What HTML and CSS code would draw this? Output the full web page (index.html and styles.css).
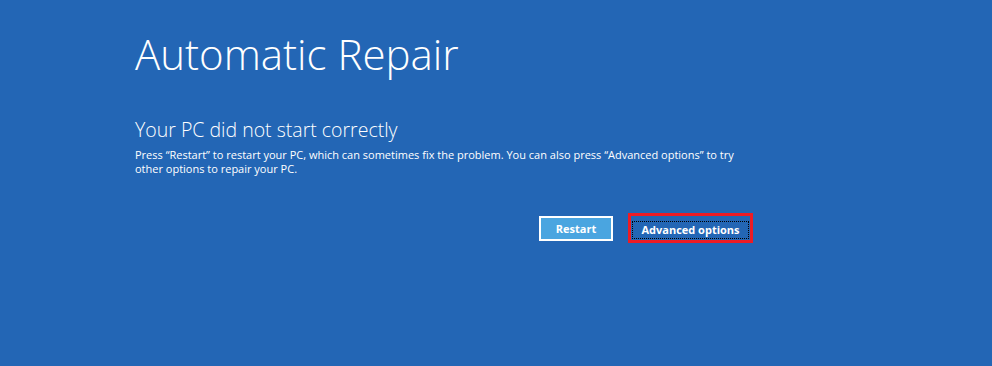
FILE: index.html
```html
<!DOCTYPE html>
<html lang="en">
<head>
    <meta charset="UTF-8">
    <meta name="viewport" content="width=device-width, initial-scale=1.0">
    <title>Automatic Repair</title>
    <link rel="stylesheet" href="styles.css">
</head>
<body>
    <div class="screen">
        <h1 class="title">Automatic Repair</h1>
        <h2 class="subtitle">Your PC did not start correctly</h2>
        <p class="message">Press “Restart” to restart your PC, which can sometimes fix the problem. You can also press “Advanced options” to try other options to repair your PC.</p>
        <div class="actions">
            <button class="btn btn-restart">Restart</button>
            <div class="highlight">
                <button class="btn btn-advanced">Advanced options</button>
            </div>
        </div>
    </div>
</body>
</html>
```

FILE: styles.css
```css
html, body {
    margin: 0;
    height: 100%;
}
body {
    background-color: #2366b5;
    color: #fff;
    font-family: "Open Sans", "Noto Sans", sans-serif;
}
.screen {
    padding: 26px 0 0 135px;
    width: 618px;
}
.title {
    margin: 0;
    font-size: 42px;
    font-weight: 300;
    line-height: 56px;
}
.subtitle {
    margin: 35px 0 0 0;
    font-size: 19.5px;
    font-weight: 300;
    line-height: 26px;
}
.message {
    margin: 5px 0 0 0;
    font-size: 11px;
    line-height: 14px;
}
.actions {
    display: flex;
    justify-content: flex-end;
    align-items: center;
    gap: 15px;
    margin-top: 37px;
}
.btn {
    font-family: "Open Sans", "Noto Sans", sans-serif;
    font-size: 11px;
    font-weight: bold;
    color: #fff;
    cursor: pointer;
}
.btn-restart {
    width: 74px;
    height: 25px;
    background-color: #4aa5e0;
    border: 2px solid #fff;
    padding: 0;
}
.highlight {
    border: 3px solid #ee1c25;
    padding: 1px;
}
.btn-advanced {
    width: 117px;
    height: 18px;
    background-color: #2366b5;
    border: 1px dotted #fff;
    outline: 1px dotted #000;
    outline-offset: -1px;
    padding: 0;
}
```
